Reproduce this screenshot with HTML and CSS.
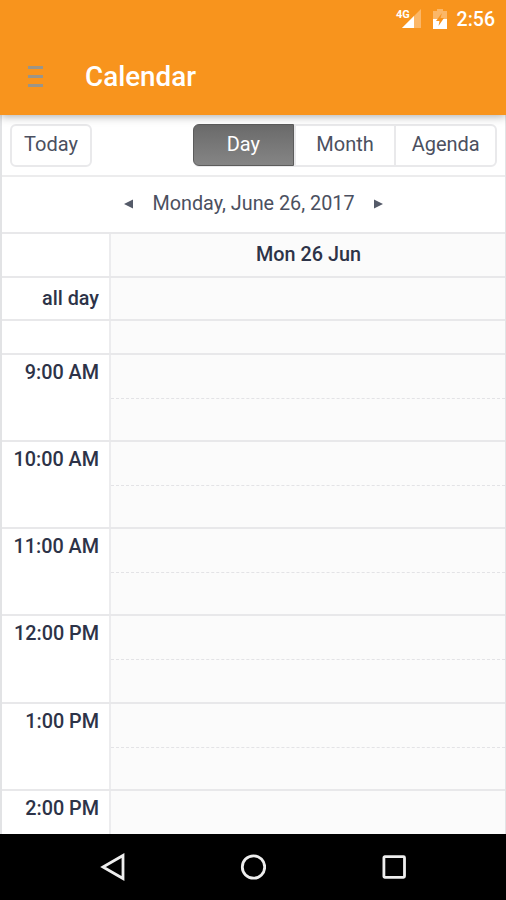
FILE: index.html
```html
<!DOCTYPE html>
<html lang="en">
<head>
  <meta charset="UTF-8">
  <title>Calendar</title>
  <link rel="stylesheet" href="styles.css">
</head>
<body>
  <header class="app-header">
    <div class="status-bar">
      <svg class="signal" width="27" height="22" viewBox="0 0 27 22">
        <path d="M26 1V20H7Z" fill="#fbb768"/>
        <path d="M19 8V20H7Z" fill="#fff"/>
        <text x="1" y="9.5" class="network">4G</text>
      </svg>
      <svg class="battery" width="14" height="20" viewBox="0 0 14 20">
        <path d="M4 0H10V2H14V10H0V2H4Z" fill="#fbb768"/>
        <path d="M0 10H14V20H0Z" fill="#fff"/>
        <path d="M9 4L3 12H6.5L5.5 17L11 9H7.5Z" fill="#f8941d"/>
      </svg>
      <span class="clock">2:56</span>
    </div>
    <div class="title-bar">
      <div class="menu">
        <span></span>
        <span></span>
        <span></span>
      </div>
      <h1>Calendar</h1>
    </div>
  </header>

  <main class="calendar">
    <div class="toolbar">
      <button class="today">Today</button>
      <div class="views">
        <button class="active">Day</button>
        <button>Month</button>
        <button>Agenda</button>
      </div>
    </div>
    <div class="date-nav">
      <svg width="9" height="10" viewBox="0 0 9 10"><path d="M9 0.5V9.5L0 5Z" fill="#555b69"/></svg>
      <span>Monday, June 26, 2017</span>
      <svg width="9" height="10" viewBox="0 0 9 10"><path d="M0 0.5V9.5L9 5Z" fill="#555b69"/></svg>
    </div>

    <div class="row day-head">
      <div class="time"></div>
      <div class="slot">Mon 26 Jun</div>
    </div>
    <div class="row all-day">
      <div class="time">all day</div>
      <div class="slot"></div>
    </div>
    <div class="row spacer">
      <div class="time"></div>
      <div class="slot"></div>
    </div>
    <div class="row hour">
      <div class="time">9:00 AM</div>
      <div class="slot"><div class="half"></div></div>
    </div>
    <div class="row hour">
      <div class="time">10:00 AM</div>
      <div class="slot"><div class="half"></div></div>
    </div>
    <div class="row hour">
      <div class="time">11:00 AM</div>
      <div class="slot"><div class="half"></div></div>
    </div>
    <div class="row hour">
      <div class="time">12:00 PM</div>
      <div class="slot"><div class="half"></div></div>
    </div>
    <div class="row hour">
      <div class="time">1:00 PM</div>
      <div class="slot"><div class="half"></div></div>
    </div>
    <div class="row hour">
      <div class="time">2:00 PM</div>
      <div class="slot"><div class="half"></div></div>
    </div>
  </main>

  <footer class="nav-bar">
    <svg width="26" height="28" viewBox="0 0 26 28"><path d="M24 2.5V25.5L4 14Z"/></svg>
    <svg width="26" height="26" viewBox="0 0 26 26"><circle cx="13.5" cy="13" r="11.2"/></svg>
    <svg width="26" height="26" viewBox="0 0 26 26"><rect x="2.9" y="2.7" width="20.6" height="20.6" rx="1"/></svg>
  </footer>
</body>
</html>
```

FILE: styles.css
```css
* {
  box-sizing: border-box;
}
body {
  font-family: Roboto, sans-serif;
  background-color: #fff;
  color: #4b5060;
  margin: 0;
  height: 900px;
  display: flex;
  flex-direction: column;
  overflow: hidden;
}
.app-header {
  position: relative;
  flex: none;
  height: 115px;
  background-color: #f8941d;
  color: #fff;
  box-shadow: 0 1px 9px rgba(0, 0, 0, 0.35);
}
.status-bar {
  display: flex;
  justify-content: flex-end;
  align-items: center;
  height: 38px;
  padding-right: 11px;
}
.signal {
  margin-right: 11px;
}
.network {
  font-size: 11px;
  font-weight: 700;
  fill: #fff;
  stroke: #f8941d;
  stroke-width: 2px;
  paint-order: stroke;
}
.battery {
  margin-right: 10px;
}
.clock {
  font-size: 19.5px;
  font-weight: 500;
}
.title-bar {
  display: flex;
  align-items: center;
  height: 77px;
  padding-left: 28px;
}
.menu {
  display: flex;
  flex-direction: column;
  gap: 6px;
  width: 15px;
  margin-right: 42px;
}
.menu span {
  height: 3px;
  background-color: #9b9588;
}
h1 {
  margin: 0;
  font-size: 27.8px;
  font-weight: 500;
}
.calendar {
  flex: none;
  height: 719px;
  overflow: hidden;
  border-left: 2px solid #e2e3e5;
  border-right: 1px solid #e2e3e5;
}
.toolbar {
  display: flex;
  justify-content: space-between;
  height: 61.5px;
  padding: 9px 8px 0 8px;
  border-bottom: 2px solid #ececed;
}
button {
  font-family: inherit;
  font-size: 20px;
  color: #4b5060;
  background: none;
  border: none;
  padding: 0 0 3px;
}
.today {
  width: 82px;
  height: 43px;
  border: 2px solid #e9e9eb;
  border-radius: 6px;
}
.views {
  display: flex;
  width: 304px;
  height: 43px;
  border: 2px solid #e9e9eb;
  border-radius: 6px;
}
.views button {
  flex: 1;
  border-left: 2px solid #e9e9eb;
}
.views .active {
  margin: -2px 0 -1px -2px;
  padding-bottom: 2px;
  color: #fff;
  background: linear-gradient(#6a6a6a, #858585);
  border: 1px solid #5c5c5c;
  border-radius: 6px 0 0 6px;
}
.date-nav {
  display: flex;
  justify-content: center;
  align-items: center;
  gap: 19px;
  height: 55.5px;
  padding-bottom: 2px;
  font-size: 19.8px;
}
.date-nav svg {
  margin-top: 2px;
}
.row {
  display: flex;
  border-top: 2px solid #e8e8ea;
  color: #2d3348;
  font-size: 19.8px;
  font-weight: 500;
  line-height: 24px;
}
.time {
  width: 109px;
  padding: 6px 10px 0 0;
  border-right: 2px solid #ececee;
  text-align: right;
}
.slot {
  flex: 1;
  background-color: #fbfbfb;
  text-align: center;
}
.day-head {
  height: 43.5px;
}
.day-head .slot {
  padding: 9px 0 0 1px;
}
.all-day {
  height: 43.5px;
}
.all-day .time {
  padding-top: 9px;
}
.spacer {
  height: 33.5px;
}
.hour {
  height: 87.25px;
}
.half {
  height: 44px;
  border-bottom: 1px dashed #e3e3e6;
}
.nav-bar {
  flex: 1;
  display: flex;
  justify-content: center;
  align-items: center;
  gap: 115px;
  background-color: #000;
}
.nav-bar svg {
  fill: none;
  stroke: #eee;
  stroke-width: 2.8;
}
```
